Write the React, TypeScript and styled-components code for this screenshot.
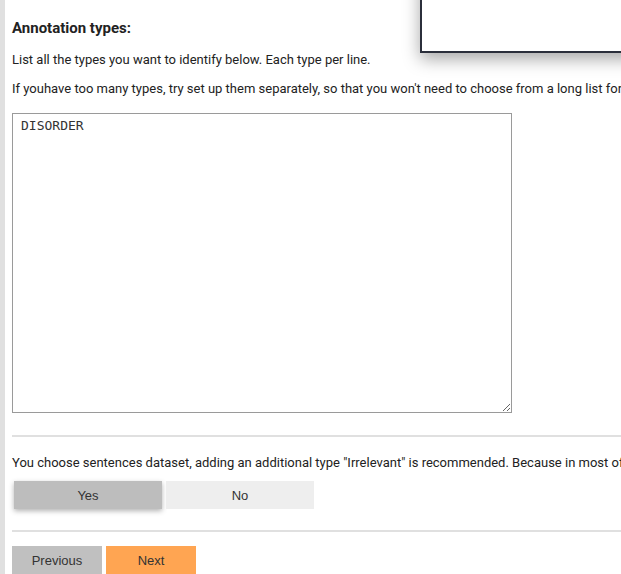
import styled, { createGlobalStyle } from "styled-components"

const Global = createGlobalStyle`
html, body {
    margin:0;
    padding:0;
    background:#fff;
    overflow:hidden;
}
body{
    font-family:Roboto, "Liberation Sans", sans-serif;
    color:#222;
}
`

const App = ()=>{
    return(
        <Page>
            <Global/>
            <SideBar/>
            <Content>
                <Heading>Annotation types:</Heading>
                <Text top={12}>List all the types you want to identify below. Each type per line.</Text>
                <Text top={9}>If youhave too many types, try set up them separately, so that you won't need to choose from a long list for each sentence.</Text>
                <Types defaultValue="DISORDER" spellCheck={false}/>
                <Rule top={22}/>
                <Text top={16}>You choose sentences dataset, adding an additional type "Irrelevant" is recommended. Because in most of the cases, a sentence does not contain any type.</Text>
                <Choices>
                    <Choice active>Yes</Choice>
                    <Choice>No</Choice>
                </Choices>
                <Rule top={21}/>
                <Nav>
                    <NavButton>Previous</NavButton>
                    <NavButton primary>Next</NavButton>
                </Nav>
            </Content>
            <Popup/>
        </Page>
    )
};
export default App;

const Page = styled.div`
position:relative;
display:flex;
width:100%;
height:574px;
overflow:hidden;
`

const SideBar = styled.div`
width:5px;
flex-shrink:0;
background-color:#e0e0e0;
`

const Content = styled.div`
flex:1;
min-width:0;
padding-left:7px;
display:flex;
flex-direction:column;
`

const Heading = styled.h3`
margin:18px 0 0 0;
font-size:15px;
line-height:20px;
font-weight:700;
color:#222;
`

const Text = styled.p<{ top: number }>`
margin:${p => p.top}px 0 0 0;
font-size:13px;
line-height:20px;
white-space:nowrap;
color:#222;
`

const Types = styled.textarea`
margin-top:14px;
width:500px;
height:300px;
flex-shrink:0;
box-sizing:border-box;
border:1px solid #9a9a9a;
padding:4px 8px;
font-family:"DejaVu Sans Mono", monospace;
font-size:13px;
line-height:16px;
color:#333;
resize:both;
outline:none;
`

const Rule = styled.div<{ top: number }>`
margin-top:${p => p.top}px;
height:2px;
flex-shrink:0;
background-color:#e0e0e0;
margin-right:-40px;
`

const Choices = styled.div`
margin-top:8px;
display:flex;
gap:4px;
padding-left:2px;
`

const Choice = styled.button<{ active?: boolean }>`
width:148px;
height:28px;
border:none;
font-family:"Liberation Sans", Arial, sans-serif;
font-size:13px;
color:#333;
background-color:${p => p.active ? "#bdbdbd" : "#eeeeee"};
box-shadow:${p => p.active ? "0 2px 5px rgba(0,0,0,0.3)" : "none"};
`

const Nav = styled.div`
margin-top:14px;
display:flex;
gap:4px;
`

const NavButton = styled.button<{ primary?: boolean }>`
width:90px;
height:28px;
border:none;
font-family:"Liberation Sans", Arial, sans-serif;
font-size:13px;
color:#333;
background-color:${p => p.primary ? "#ffa552" : "#c0c0c0"};
`

const Popup = styled.div`
position:absolute;
top:-60px;
left:420px;
width:300px;
height:113px;
box-sizing:border-box;
background:#fff;
border:2px solid #2b2f3b;
box-shadow:0 6px 16px rgba(0,0,0,0.35);
`
